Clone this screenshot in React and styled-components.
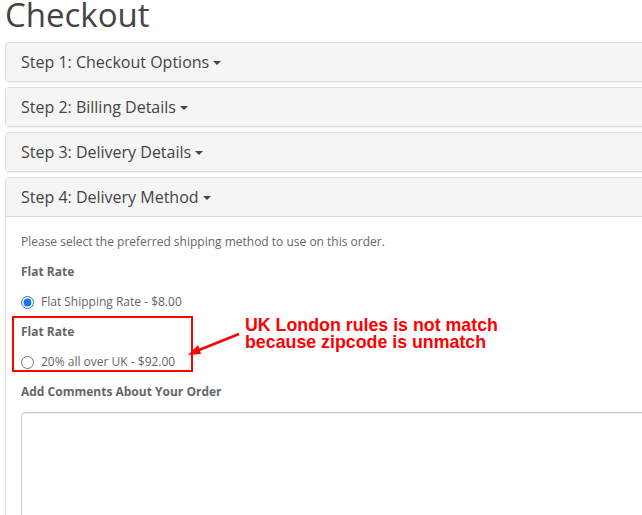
import React from "react";
import styled, { createGlobalStyle } from "styled-components";

const Global = createGlobalStyle`
  html, body { margin: 0; padding: 0; background: #fff; overflow: hidden; }
  body { font-family: "Open Sans", sans-serif; font-size: 12px; line-height: 20px; color: #666; }
  * { box-sizing: border-box; }
`;

const Page = styled.div`
  position: relative;
  width: 800px;
  padding-left: 5px;
`;

const Title = styled.h1`
  margin: -3px 0 9px 0;
  font-family: "Open Sans", sans-serif;
  font-size: 33px;
  font-weight: 400;
  line-height: 1.1;
  color: #444;
`;

const Panel = styled.div`
  border: 1px solid #ddd;
  border-radius: 4px;
  background: #fff;
  margin-bottom: 5px;
  box-shadow: 0 1px 1px rgba(0, 0, 0, 0.05);
`;

const Heading = styled.div`
  background: #f5f5f5;
  padding: 10px 15px;
  border-radius: 3px 3px 0 0;
  border-bottom: ${(p) => (p.$open ? "1px solid #ddd" : "0")};
`;

const PanelTitle = styled.h4`
  margin: 0;
  font-family: "Open Sans", sans-serif;
  font-size: 16px;
  font-weight: 400;
  line-height: 18px;
  color: #444;
  display: flex;
  align-items: center;
`;

const Caret = styled.span`
  display: inline-block;
  width: 0;
  height: 0;
  margin-left: 4px;
  border-top: 4px solid #444;
  border-left: 4px solid transparent;
  border-right: 4px solid transparent;
  margin-top: 2px;
`;

const Body = styled.div`
  padding: 15px;
  height: 330px;
`;

const Para = styled.p`
  margin: 0 0 10px;
`;

const Strong = styled.strong`
  font-weight: 700;
`;

const RadioRow = styled.div`
  margin: 10px 0;
`;

const RadioLabel = styled.label`
  display: flex;
  align-items: center;
  min-height: 20px;
  cursor: pointer;
`;

const RadioInput = styled.input`
  margin: 0 7px 0 0;
  width: 13px;
  height: 13px;
  accent-color: #1a73e8;
`;

const TextArea = styled.textarea`
  display: block;
  width: 100%;
  height: 174px;
  padding: 6px 12px;
  border: 1px solid #ccc;
  border-radius: 4px;
  box-shadow: inset 0 1px 1px rgba(0, 0, 0, 0.075);
  font-family: "Open Sans", sans-serif;
  resize: none;
`;

const HighlightBox = styled.div`
  position: absolute;
  left: 12px;
  top: 319px;
  width: 181px;
  height: 56px;
  border: 2px solid #ff0000;
  pointer-events: none;
`;

const Note = styled.div`
  position: absolute;
  left: 245px;
  top: 320px;
  font-family: "Liberation Sans", Arial, sans-serif;
  font-weight: 700;
  font-size: 17.8px;
  line-height: 17px;
  color: #ff0000;
  white-space: nowrap;
`;

const ArrowSvg = styled.svg`
  position: absolute;
  left: 180px;
  top: 330px;
  overflow: visible;
`;

const steps = [
  "Step 1: Checkout Options",
  "Step 2: Billing Details",
  "Step 3: Delivery Details",
];

export default function App() {
  return (
    <>
      <Global />
      <Page>
        <Title>Checkout</Title>
        {steps.map((s) => (
          <Panel key={s}>
            <Heading>
              <PanelTitle>
                {s}
                <Caret />
              </PanelTitle>
            </Heading>
          </Panel>
        ))}
        <Panel>
          <Heading $open>
            <PanelTitle>
              Step 4: Delivery Method
              <Caret />
            </PanelTitle>
          </Heading>
          <Body>
            <Para>Please select the preferred shipping method to use on this order.</Para>
            <Para>
              <Strong>Flat Rate</Strong>
            </Para>
            <RadioRow>
              <RadioLabel>
                <RadioInput type="radio" name="ship" defaultChecked />
                Flat Shipping Rate - $8.00
              </RadioLabel>
            </RadioRow>
            <Para>
              <Strong>Flat Rate</Strong>
            </Para>
            <RadioRow>
              <RadioLabel>
                <RadioInput type="radio" name="ship" />
                20% all over UK - $92.00
              </RadioLabel>
            </RadioRow>
            <Para>
              <Strong>Add Comments About Your Order</Strong>
            </Para>
            <TextArea rows={8} />
          </Body>
        </Panel>
        <HighlightBox />
        <ArrowSvg width="60" height="40">
          <line x1="59" y1="7" x2="14" y2="25" stroke="#ff0000" strokeWidth="2.5" />
          <polygon points="8,28 18,18 21,27" fill="#ff0000" />
        </ArrowSvg>
        <Note>
          UK London rules is not match
          <br />
          because zipcode is unmatch
        </Note>
      </Page>
    </>
  );
}
